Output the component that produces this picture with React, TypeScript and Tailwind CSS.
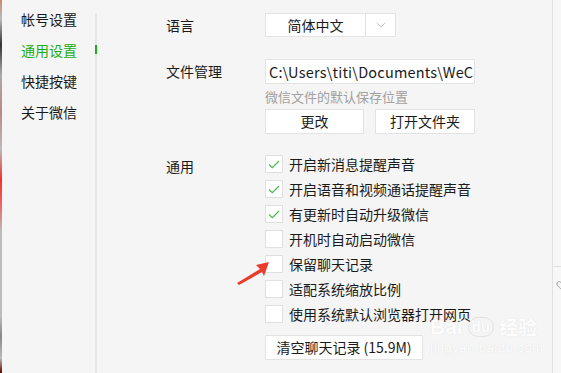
import { Heart } from "lucide-react";

const font = "font-['Microsoft_YaHei','Noto_Sans_CJK_SC',sans-serif]";

type Opt = { label: string; checked: boolean };

const options: Opt[] = [
  { label: "开启新消息提醒声音", checked: true },
  { label: "开启语音和视频通话提醒声音", checked: true },
  { label: "有更新时自动升级微信", checked: true },
  { label: "开机时自动启动微信", checked: false },
  { label: "保留聊天记录", checked: false },
  { label: "适配系统缩放比例", checked: false },
  { label: "使用系统默认浏览器打开网页", checked: false },
];

function Check({ checked }: { checked: boolean }) {
  return (
    <span className="grid size-[18px] shrink-0 place-items-center border border-[#e0e0e0] bg-white">
      {checked ? (
        <svg width="12" height="9" viewBox="0 0 12 9" fill="none">
          <path d="M1 4.5 L4.3 7.6 L11 1" stroke="#4cb84c" strokeWidth="1.2" />
        </svg>
      ) : null}
    </span>
  );
}

function Btn({ children, w }: { children: React.ReactNode; w: string }) {
  return (
    <div className={`flex h-[25px] items-center justify-center border border-[#e3e3e3] bg-white text-[14px] text-[#1a1a1a] ${w}`}>
      {children}
    </div>
  );
}

export default function App() {
  return (
    <div className={`relative flex h-[373px] w-[561px] overflow-hidden bg-[#f5f5f5] ${font}`}>
      {/* strip of desktop behind the window */}
      <div className="w-[2px] shrink-0 bg-[linear-gradient(#c98a6a_0%,#bbb_5%,#333_12%,#aaa_20%,#b88_30%,#bbb_40%,#e33_48%,#e66_55%,#bbb_62%,#bbb_85%,#888_90%,#bbb_96%,#600_100%)]" />

      {/* sidebar */}
      <div className="flex w-[93px] shrink-0 flex-col pl-[19px] pt-[10px] text-[14px] text-[#1a1a1a]">
        <div className="h-[31px] leading-[18px]">帐号设置</div>
        <div className="h-[31px] leading-[18px] text-[#1aad19]">通用设置</div>
        <div className="h-[31px] leading-[18px]">快捷按键</div>
        <div className="h-[31px] leading-[18px]">关于微信</div>
      </div>

      {/* divider */}
      <div className="relative mt-[13px] w-[2px] shrink-0 bg-[#e6e6e6]">
        <div className="absolute left-0 top-[32px] h-[9px] w-[2px] bg-[#1aad19]" />
      </div>

      {/* main */}
      <div className="flex flex-1 flex-col pl-[69px] pt-[13px] text-[14px] text-[#1a1a1a]">
        <div className="flex h-[24px] items-center">
          <div className="w-[99px]">语言</div>
          <div className="flex h-[24px] w-[131px] border border-[#e3e3e3] bg-white">
            <div className="flex flex-1 items-center justify-center">简体中文</div>
            <div className="flex w-[30px] items-center justify-center border-l border-[#e3e3e3]">
              <svg width="10" height="6" viewBox="0 0 10 6" fill="none">
                <path d="M0.5 0.5 L5 5 L9.5 0.5" stroke="#c8c8c8" strokeWidth="1" />
              </svg>
            </div>
          </div>
        </div>

        <div className="mt-[22px] flex">
          <div className="flex h-[25px] w-[99px] items-center">文件管理</div>
          <div className="flex flex-col">
            <div className="flex h-[25px] w-[210px] items-center overflow-hidden whitespace-nowrap border border-[#e3e3e3] bg-white pl-[3px] text-[14.5px] tracking-[0.2px]">
              C:\Users\titi\Documents\WeCh
            </div>
            <div className="mt-[4px] h-[21px] text-[13px] leading-[18px] text-[#a0a0a0]">微信文件的默认保存位置</div>
            <div className="flex gap-[11px]">
              <Btn w="w-[99px]">更改</Btn>
              <Btn w="w-[100px]">打开文件夹</Btn>
            </div>
          </div>
        </div>

        <div className="mt-[21px] flex">
          <div className="w-[99px] pt-[2px] leading-[18px]">通用</div>
          <div className="flex flex-col">
            {options.map((o) => (
              <div key={o.label} className="flex h-[25px] items-start gap-[6px]">
                <Check checked={o.checked} />
                <span className="leading-[18px]">{o.label}</span>
              </div>
            ))}
            <div className="mt-[5px]">
              <Btn w="w-[158px]">清空聊天记录 (15.9M)</Btn>
            </div>
          </div>
        </div>
      </div>

      {/* right edge: next pane */}
      <div className="flex w-[9px] shrink-0 flex-col border-l border-[#e2e2e2] bg-[#f7f7f7]">
        <div className="h-[267px] border-b border-[#e2e2e2]" />
        <div className="pl-[3px] pt-[13px]">
          <Heart size={10} strokeWidth={1.5} className="text-[#777]" />
        </div>
      </div>

      {/* annotation arrow */}
      <svg className="absolute left-[234px] top-[259px]" width="40" height="30" viewBox="0 0 40 30">
        <polygon points="35,3 22,6 26,10 3,24 5,26 28,13 30,17" fill="#e83d2c" />
      </svg>

      {/* watermark */}
      <div className="pointer-events-none absolute left-[430px] top-[314px] flex flex-col text-white opacity-80 [text-shadow:0_0_1px_#d4d4d4]">
        <div className="flex items-center gap-[5px] font-['Liberation_Sans',sans-serif] text-[21px] font-bold leading-[26px]">
          <span>Bai</span>
          <span className="rounded-full border border-[#dedede] px-[3px] text-[15px] leading-[18px]">du</span>
          <span className={`${font} text-[19px]`}>经验</span>
        </div>
        <div className="font-['Liberation_Sans',sans-serif] text-[13px] leading-[16px] tracking-[0.5px]">jingyan.baidu.com</div>
      </div>
    </div>
  );
}
